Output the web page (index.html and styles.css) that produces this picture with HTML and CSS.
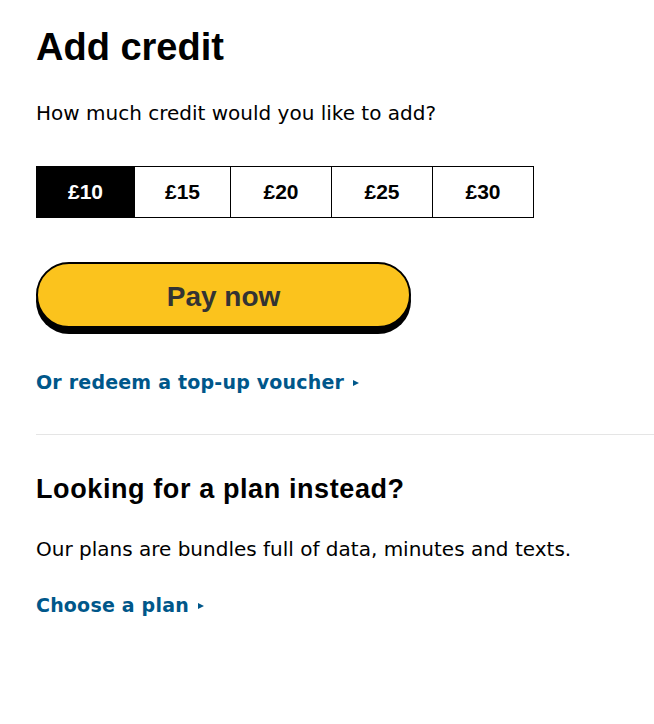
FILE: index.html
```html
<!DOCTYPE html>
<html lang="en">
<head>
    <meta charset="UTF-8">
    <meta name="viewport" content="width=device-width, initial-scale=1.0">
    <title>Add credit</title>
    <link rel="stylesheet" href="styles.css">
</head>
<body>

    <div class="page">
        <h1>Add credit</h1>
        <p class="lead">How much credit would you like to add?</p>

        <div class="amounts">
            <button class="amount selected">£10</button>
            <button class="amount">£15</button>
            <button class="amount">£20</button>
            <button class="amount">£25</button>
            <button class="amount">£30</button>
        </div>

        <button class="pay">Pay now</button>

        <a class="link voucher" href="#">Or redeem a top-up voucher <span class="arrow"></span></a>

        <hr class="divider">

        <h2>Looking for a plan instead?</h2>
        <p class="text">Our plans are bundles full of data, minutes and texts.</p>
        <a class="link" href="#">Choose a plan <span class="arrow"></span></a>
    </div>

</body>
</html>
```

FILE: styles.css
```css
body { margin: 0; background: white; color: black; font-family: "DejaVu Sans", sans-serif; }
.page { padding: 25px 0 0 36px; }

h1 { font-family: "Liberation Sans", Arial, sans-serif; font-size: 38px; line-height: 44px; font-weight: bold; margin: 0; }
.lead { font-size: 20px; line-height: 28px; margin: 30px 0 0; }

.amounts { display: grid; grid-template-columns: 97px 96px 101px 101px 1fr; width: 498px; height: 52px; margin-top: 39px; border: 1px solid black; box-sizing: border-box; }
.amount { border: none; border-left: 1px solid black; background: white; color: black; font-family: "Liberation Sans", Arial, sans-serif; font-size: 21px; font-weight: bold; padding: 0; cursor: pointer; }
.amount:first-child { border-left: none; }
.amount.selected { background: black; color: white; }

.pay { display: block; width: 375px; height: 66px; margin-top: 44px; padding-top: 5px; background: #fbc31d; border: 2px solid black; border-radius: 33px; box-shadow: 0 6px 0 black; color: #333; font-family: "Liberation Sans", Arial, sans-serif; font-size: 28px; font-weight: bold; cursor: pointer; }

.link { display: flex; align-items: center; width: max-content; color: #00578a; font-weight: bold; font-size: 19px; line-height: 24px; letter-spacing: 0.2px; text-decoration: none; }
.voucher { margin-top: 42px; }
.arrow { width: 0; height: 0; margin-left: 9px; margin-top: 1px; border-top: 3px solid transparent; border-bottom: 3px solid transparent; border-left: 6px solid #00578a; }

.divider { border: none; border-top: 1px solid #e5e5e5; margin: 40px 0 0; }

h2 { font-family: "Liberation Sans", Arial, sans-serif; font-size: 27px; line-height: 32px; letter-spacing: 0.6px; font-weight: bold; margin: 38px 0 0; }
.text { font-size: 20px; line-height: 28px; margin: 30px 0 0; }
.text + .link { margin-top: 30px; }
```
